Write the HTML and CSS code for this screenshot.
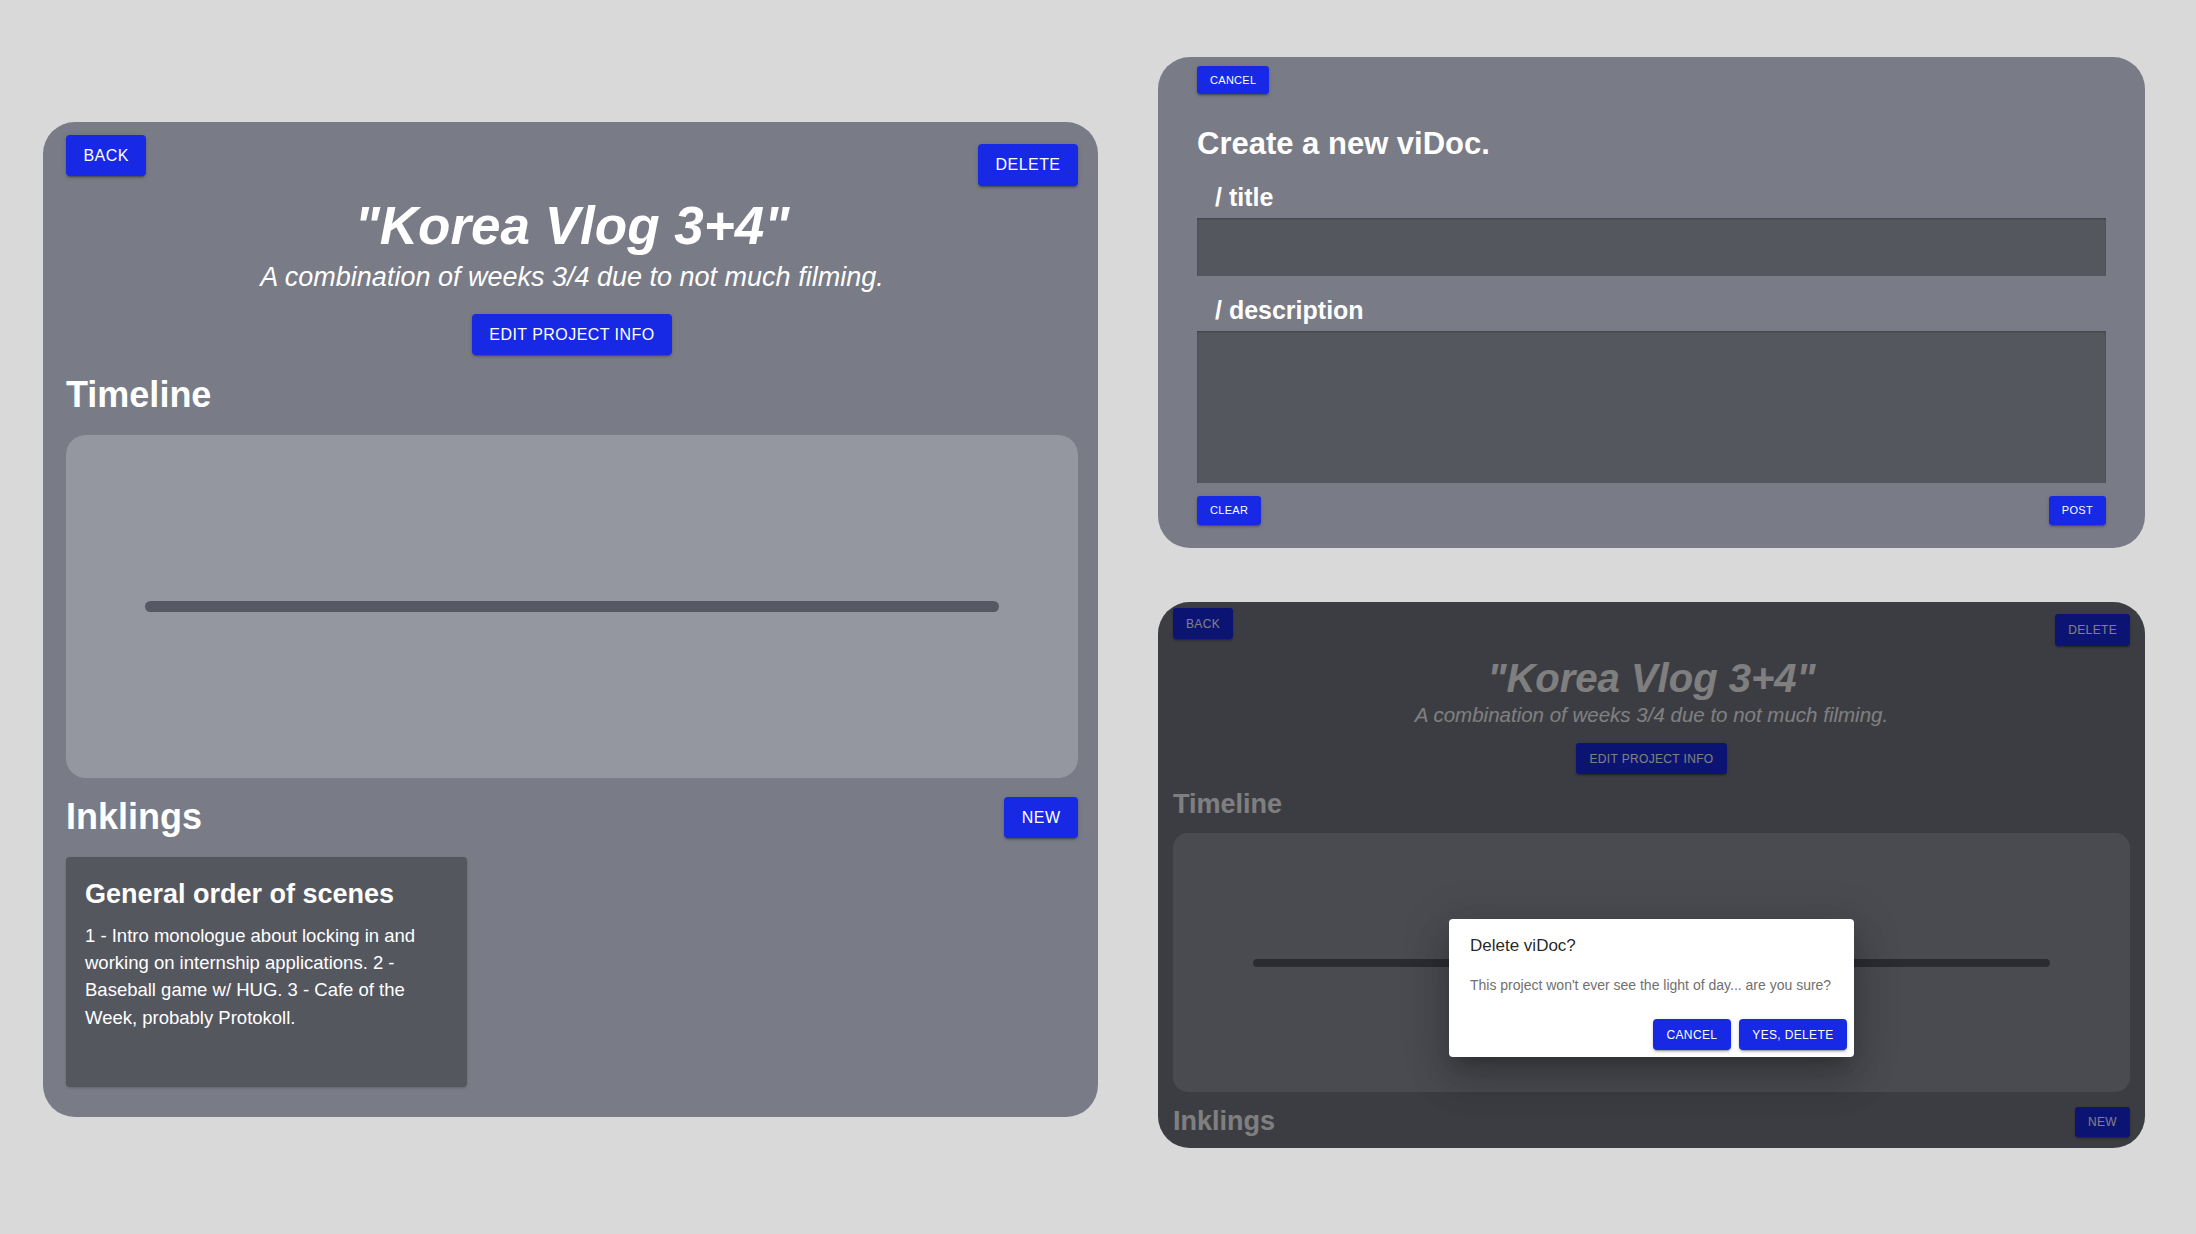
FILE: index.html
```html
<!DOCTYPE html>
<html lang="en">
<head>
<meta charset="utf-8">
<title>viDoc screens</title>
<link rel="stylesheet" href="styles.css">
</head>
<body>
<main class="canvas">
  <section class="project-card">
    <div class="card-top">
      <button class="btn">BACK</button>
      <button class="btn btn-delete">DELETE</button>
    </div>
    <h1 class="project-title">"Korea Vlog 3+4"</h1>
    <p class="project-desc">A combination of weeks 3/4 due to not much filming.</p>
    <button class="btn btn-edit">EDIT PROJECT INFO</button>
    <h2 class="section-title">Timeline</h2>
    <div class="timeline"><div class="timeline-bar"></div></div>
    <div class="section-row">
      <h2 class="section-title">Inklings</h2>
      <button class="btn">NEW</button>
    </div>
    <div class="inklings">
      <article class="inkling">
        <h3 class="inkling-title">General order of scenes</h3>
        <p class="inkling-text">1 - Intro monologue about locking in and working on internship applications. 2 - Baseball game w/ HUG. 3 - Cafe of the Week, probably Protokoll.</p>
      </article>
    </div>
  </section>

  <div class="side">
    <section class="create-card">
      <button class="btn btn-sm">CANCEL</button>
      <h2 class="create-title">Create a new viDoc.</h2>
      <label class="field-label" for="title-in">/ title</label>
      <input class="field" id="title-in" type="text">
      <label class="field-label field-label--second" for="desc-in">/ description</label>
      <textarea class="field field--area" id="desc-in"></textarea>
      <div class="create-actions">
        <button class="btn btn-sm">CLEAR</button>
        <button class="btn btn-sm">POST</button>
      </div>
    </section>

    <section class="project-card project-card--compact">
      <div class="card-top">
        <button class="btn">BACK</button>
        <button class="btn btn-delete">DELETE</button>
      </div>
      <h1 class="project-title">"Korea Vlog 3+4"</h1>
      <p class="project-desc">A combination of weeks 3/4 due to not much filming.</p>
      <button class="btn btn-edit">EDIT PROJECT INFO</button>
      <h2 class="section-title">Timeline</h2>
      <div class="timeline"><div class="timeline-bar"></div></div>
      <div class="section-row">
        <h2 class="section-title">Inklings</h2>
        <button class="btn">NEW</button>
      </div>
      <div class="scrim"></div>
      <div class="dialog" role="dialog">
        <h2 class="dialog-title">Delete viDoc?</h2>
        <p class="dialog-text">This project won't ever see the light of day... are you sure?</p>
        <div class="dialog-actions">
          <button class="btn">CANCEL</button>
          <button class="btn">YES, DELETE</button>
        </div>
      </div>
    </section>
  </div>
</main>
</body>
</html>
```

FILE: styles.css
```css
html, body {
  margin: 0;
  padding: 0;
}

body {
  background: #d9d9d9;
  font-family: "Liberation Sans", Arial, Helvetica, sans-serif;
  color: #ffffff;
  width: 2196px;
  height: 1234px;
  overflow: hidden;
}

.canvas {
  display: flex;
  align-items: flex-start;
  gap: 60px;
  padding: 57px 0 0 43px;
}

/* ---------- buttons ---------- */
.btn {
  display: inline-flex;
  align-items: center;
  justify-content: center;
  box-sizing: border-box;
  height: 41px;
  padding: 0 17.5px;
  border: 0;
  border-radius: 4px;
  background: #1829e6;
  color: #ffffff;
  font-family: "Liberation Sans", Arial, Helvetica, sans-serif;
  font-size: 16px;
  font-weight: 400;
  line-height: 1;
  letter-spacing: 0.45px;
  white-space: nowrap;
  cursor: pointer;
  box-shadow: 0 3px 1px -2px rgba(0, 0, 0, 0.2), 0 2px 2px 0 rgba(0, 0, 0, 0.14), 0 1px 5px 0 rgba(0, 0, 0, 0.12);
}

.btn-sm {
  height: 28px;
  padding: 0 13px;
  font-size: 11px;
  letter-spacing: 0.3px;
  border-radius: 3px;
}

/* ---------- project card ---------- */
.project-card {
  box-sizing: border-box;
  width: 1055px;
  margin-top: 65px;
  padding: 13px 20px 30px 23px;
  background: #797b86;
  border-radius: 32px;
  display: flex;
  flex-direction: column;
}

.project-card > * {
  flex-shrink: 0;
}

.card-top {
  display: flex;
  justify-content: space-between;
  align-items: flex-start;
}

.btn-delete {
  margin-top: 9px;
  height: 42px;
}

.project-title {
  margin: 10px 0 0;
  font-size: 53px;
  line-height: 60px;
  font-style: italic;
  font-weight: 700;
  text-align: center;
}

.project-desc {
  margin: 5px 0 0;
  font-size: 27px;
  line-height: 32px;
  font-style: italic;
  font-weight: 400;
  text-align: center;
}

.btn-edit {
  align-self: center;
  margin-top: 21px;
}

.section-title {
  margin: 20px 0 0;
  font-size: 36px;
  line-height: 40px;
  font-weight: 700;
}

.timeline {
  margin-top: 20px;
  height: 343px;
  box-sizing: border-box;
  padding: 0 79px;
  background: #9497a0;
  border-radius: 20px;
  display: flex;
  align-items: center;
}

.timeline-bar {
  flex: 1;
  height: 11px;
  border-radius: 6px;
  background: #565963;
}

.section-row {
  margin-top: 19px;
  display: flex;
  justify-content: space-between;
  align-items: flex-start;
}

.section-row .section-title {
  margin: 0;
}

.inklings {
  margin-top: 19px;
  display: flex;
  gap: 20px;
}

.inkling {
  box-sizing: border-box;
  width: 401px;
  height: 230px;
  padding: 21px 19px;
  background: #55575f;
  border-radius: 4px;
  box-shadow: 0 1px 3px rgba(0, 0, 0, 0.18);
}

.inkling-title {
  margin: 0;
  font-size: 27px;
  line-height: 32px;
  font-weight: 700;
}

.inkling-text {
  margin: 12px 0 0;
  font-size: 18.5px;
  line-height: 27.2px;
  font-weight: 400;
}

/* ---------- right column ---------- */
.side {
  width: 987px;
  display: flex;
  flex-direction: column;
  gap: 54px;
}

.create-card {
  box-sizing: border-box;
  padding: 9px 39px 23px;
  background: #797b86;
  border-radius: 32px;
  display: flex;
  flex-direction: column;
}

.create-card > .btn-sm {
  align-self: flex-start;
}

.create-title {
  margin: 32px 0 0;
  font-size: 31px;
  line-height: 36px;
  font-weight: 700;
}

.field-label {
  display: block;
  margin: 20px 0 0 18px;
  font-size: 25px;
  line-height: 30px;
  font-weight: 700;
}

.field-label--second {
  margin-top: 19px;
}

.field {
  display: block;
  box-sizing: border-box;
  width: 100%;
  height: 58px;
  margin: 6px 0 0;
  padding: 0 12px;
  border: 0;
  border-radius: 0;
  background: #55575f;
  color: #ffffff;
  font-family: "Liberation Sans", Arial, sans-serif;
  font-size: 18px;
  box-shadow: inset 0 1px 2px rgba(0, 0, 0, 0.25);
  outline: none;
}

.field--area {
  height: 152px;
  resize: none;
}

.create-actions {
  margin-top: 13px;
  display: flex;
  justify-content: space-between;
}

.create-actions .btn-sm {
  height: 29px;
}

/* ---------- compact (dimmed) project card ---------- */
.project-card--compact {
  position: relative;
  width: 987px;
  height: 546px;
  margin-top: 0;
  padding: 6px 15px;
  overflow: hidden;
}

.project-card--compact .btn {
  height: 31px;
  padding: 0 13px;
  font-size: 12px;
  letter-spacing: 0.34px;
  border-radius: 3px;
}

.project-card--compact .btn-delete {
  margin-top: 6px;
  height: 32px;
}

.project-card--compact .project-title {
  margin-top: 9px;
  font-size: 40px;
  line-height: 46px;
}

.project-card--compact .project-desc {
  margin-top: 2px;
  font-size: 20.5px;
  line-height: 24px;
}

.project-card--compact .btn-edit {
  margin-top: 16px;
}

.project-card--compact .section-title {
  margin-top: 15px;
  font-size: 27px;
  line-height: 30px;
}

.project-card--compact .timeline {
  margin-top: 14px;
  height: 259px;
  padding: 0 80px;
  border-radius: 15px;
}

.project-card--compact .timeline-bar {
  height: 8px;
  border-radius: 4px;
}

.project-card--compact .section-row {
  margin-top: 15px;
}

.project-card--compact .section-row .section-title {
  margin: 0;
  line-height: 28px;
}

.project-card--compact .section-row .btn {
  height: 30px;
}

.scrim {
  position: absolute;
  inset: 0;
  background: rgba(0, 0, 0, 0.5);
}

.dialog {
  position: absolute;
  top: 317px;
  left: 50%;
  margin-left: -202.5px;
  box-sizing: border-box;
  width: 405px;
  padding: 17px 7px 7px 21px;
  background: #ffffff;
  border-radius: 4px;
  color: rgba(0, 0, 0, 0.87);
  box-shadow: 0 11px 15px -7px rgba(0, 0, 0, 0.2), 0 24px 38px 3px rgba(0, 0, 0, 0.14), 0 9px 46px 8px rgba(0, 0, 0, 0.12);
}

.dialog-title {
  margin: 0;
  font-size: 17px;
  line-height: 20px;
  font-weight: 400;
}

.dialog-text {
  margin: 20px 0 0;
  font-size: 14px;
  line-height: 18px;
  color: #707070;
}

.dialog-actions {
  margin-top: 25px;
  display: flex;
  justify-content: flex-end;
  gap: 8px;
}

.project-card--compact .dialog-actions .btn {
  height: 31px;
  padding: 0 13.5px;
  font-size: 12px;
  letter-spacing: 0.35px;
  border-radius: 4px;
}
```
